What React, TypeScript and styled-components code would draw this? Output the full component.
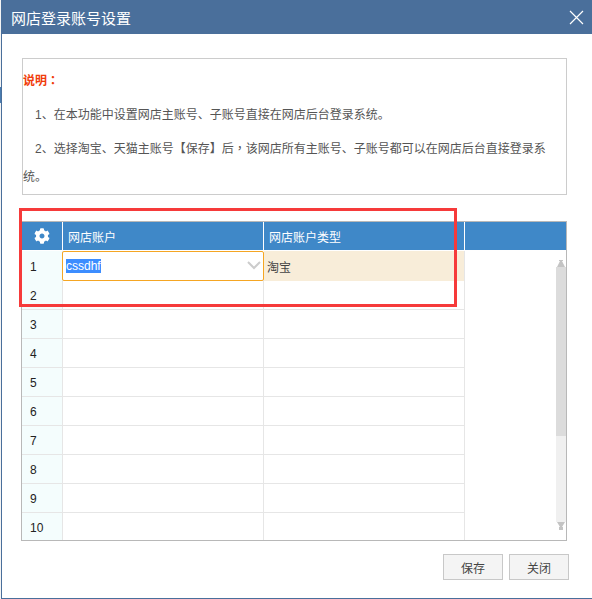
import React from "react";
import styled, { createGlobalStyle } from "styled-components";
import { FaCog } from "react-icons/fa";

const Global = createGlobalStyle`
  html {
    height: 100%;
    background: linear-gradient(#f4f4f4 87px, #4a7cb0 87px, #4a7cb0 103px, #f4f4f4 103px) no-repeat;
  }
  body {
    margin: 0;
    padding: 0;
    font-family: "Liberation Sans", "Noto Sans CJK SC", sans-serif;
    font-size: 12px;
  }
  * { box-sizing: border-box; }
`;

const Dialog = styled.div`
  position: relative;
  width: 591px;
  height: 599px;
  margin-left: 1px;
  border-left: 1px solid #4a6f9b;
  border-bottom: 1px solid #4a6f9b;
  background: #fff;
  display: flex;
  flex-direction: column;
`;

const TitleBar = styled.div`
  height: 34px;
  background: #4a6f9b;
  color: #fff;
  display: flex;
  align-items: center;
  justify-content: space-between;
  padding: 0 8px 0 9px;
  font-size: 15px;
`;

const CloseIcon = styled.svg`
  width: 15px;
  height: 15px;
  stroke: #fff;
  stroke-width: 1.2;
  fill: none;
`;

const Body = styled.div`
  flex: 1;
  display: flex;
  flex-direction: column;
  padding: 24px 25px 0 19px;
`;

const Notice = styled.div`
  height: 137px;
  margin: 0 0 26px 1px;
  border: 1px solid #ccc;
  color: #555;
  font-size: 12px;
  line-height: 28px;
  padding-top: 8px;
`;

const NoticeTitle = styled.div`
  color: #f03c0a;
  font-weight: 700;
  margin-bottom: 6px;
`;

const NoticeLine = styled.div`
  text-indent: 12px;
  margin-bottom: 6px;
`;

const CenteredPunct = styled.span`
  font-family: "Noto Sans CJK TC", sans-serif;
  line-height: 0;
`;

const Grid = styled.div`
  position: relative;
  height: 320px;
  border: 1px solid #b8b8b8;
  overflow: hidden;
`;

const HeaderRow = styled.div`
  display: grid;
  grid-template-columns: 41px 201px 201px 1fr;
  height: 28px;
  background: #3f88c8;
  color: #fff;
`;

const HeaderCell = styled.div`
  display: flex;
  align-items: center;
  padding-left: 5px;
  border-right: 1px solid #fff;
  &:last-child { border-right: 0; }
`;

const GearCell = styled(HeaderCell)`
  justify-content: center;
  padding: 0;
  font-size: 16px;
`;

const Row = styled.div<{ $first?: boolean }>`
  display: grid;
  grid-template-columns: 41px 201px 201px;
  height: ${(p) => (p.$first ? "30px" : "29px")};
  margin-top: ${(p) => (p.$first ? "1px" : "0")};
  width: 443px;
  border-bottom: 1px solid #e6e6e6;
`;

const NumCell = styled.div`
  display: flex;
  align-items: center;
  padding: 2px 0 0 8px;
  background: #f4fdfd;
  border-right: 1px solid #e6e6e6;
  color: #222;
  font-size: 12px;
`;

const Cell = styled.div<{ $tint?: boolean }>`
  display: flex;
  align-items: center;
  padding-left: 3px;
  border-right: 1px solid #e6e6e6;
  background: ${(p) => (p.$tint ? "#f8edd9" : "#fff")};
  color: #444;
`;

const EditorCell = styled.div`
  position: relative;
  z-index: 1;
  display: flex;
  align-items: center;
  justify-content: space-between;
  height: 30px;
  width: 202px;
  margin-left: -1px;
  padding: 0 2px 0 3px;
  border: 1px solid #f5a623;
  border-radius: 2px;
  background: #fff;
`;

const Selected = styled.span`
  background: #3c8dff;
  color: #fff;
  font-size: 12px;
  line-height: 14px;
`;

const Chevron = styled.svg`
  width: 14px;
  height: 9px;
  stroke: #ccc;
  stroke-width: 2;
  fill: none;
  margin-bottom: 1px;
`;

const Scrollbar = styled.div`
  position: absolute;
  top: 37px;
  right: 0;
  bottom: 10px;
  width: 10px;
  display: flex;
  flex-direction: column;
  background: #f0f0f0;
`;

const ScrollCap = styled.svg`
  width: 10px;
  height: 8px;
  fill: #c4c4c4;
  background: #fff;
  flex: none;
`;

const ScrollThumb = styled.div`
  height: 169px;
  background: #dcdcdc;
`;

const ScrollSpace = styled.div`
  flex: 1;
`;

const Footer = styled.div`
  display: flex;
  justify-content: flex-end;
  gap: 6px;
  margin: 13px -2px 0 0;
`;

const Button = styled.button`
  width: 60px;
  height: 26px;
  padding: 0;
  border: 1px solid #c8c8c8;
  background: #f4f4f4;
  color: #444;
  font: 12px "Liberation Sans", "Noto Sans CJK SC", sans-serif;
`;

const Highlight = styled.div`
  position: absolute;
  z-index: 2;
  left: 17px;
  top: 208px;
  width: 438px;
  height: 99px;
  border: 3px solid #f63a3a;
  pointer-events: none;
`;

export default function App() {
  const rows = [2, 3, 4, 5, 6, 7, 8, 9, 10];
  return (
    <>
      <Global />
      <Dialog>
        <TitleBar>
          <span>网店登录账号设置</span>
          <CloseIcon viewBox="0 0 15 15">
            <path d="M1 1 L14 14 M14 1 L1 14" />
          </CloseIcon>
        </TitleBar>
        <Body>
          <Notice>
            <NoticeTitle>说明<CenteredPunct>：</CenteredPunct></NoticeTitle>
            <NoticeLine>1、在本功能中设置网店主账号、子账号直接在网店后台登录系统。</NoticeLine>
            <NoticeLine>
              2、选择淘宝、天猫主账号【保存】后<CenteredPunct>，</CenteredPunct>该网店所有主账号、子账号都可以在网店后台直接登录系<br />统。
            </NoticeLine>
          </Notice>
          <Grid>
            <HeaderRow>
              <GearCell><FaCog /></GearCell>
              <HeaderCell>网店账户</HeaderCell>
              <HeaderCell>网店账户类型</HeaderCell>
              <HeaderCell />
            </HeaderRow>
            <Row $first>
              <NumCell>1</NumCell>
              <EditorCell>
                <Selected>cssdhf</Selected>
                <Chevron viewBox="0 0 14 9"><path d="M1 1 L7 7 L13 1" /></Chevron>
              </EditorCell>
              <Cell $tint>淘宝</Cell>
            </Row>
            {rows.map((n) => (
              <Row key={n}>
                <NumCell>{n}</NumCell>
                <Cell />
                <Cell />
              </Row>
            ))}
            <Scrollbar>
              <ScrollCap viewBox="0 0 10 8"><path d="M3 1 H7 V2 H6 L9 8 H1 L4 2 H3 Z" /></ScrollCap>
              <ScrollThumb />
              <ScrollSpace />
              <ScrollCap viewBox="0 0 10 8"><path d="M1 0 H9 L6 5 H7 V8 H3 V5 H4 Z" /></ScrollCap>
            </Scrollbar>
          </Grid>
          <Footer>
            <Button>保存</Button>
            <Button>关闭</Button>
          </Footer>
        </Body>
        <Highlight />
      </Dialog>
    </>
  );
}
